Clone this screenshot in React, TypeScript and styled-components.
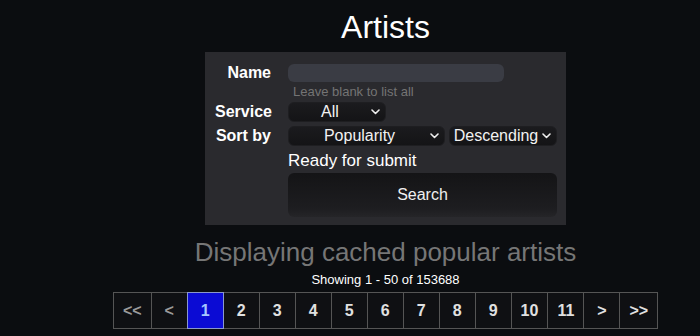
import React from "react";
import styled, { createGlobalStyle } from "styled-components";

const Global = createGlobalStyle`
  html, body { margin: 0; padding: 0; background: #0b0d10; }
  body { font-family: "Liberation Sans", Arial, sans-serif; color: #fff; }
  * { box-sizing: border-box; }
`;

const Page = styled.main`
  width: 700px;
  min-height: 336px;
  padding-left: 71px;
  display: flex;
  flex-direction: column;
  align-items: center;
`;

const Title = styled.h1`
  margin: 9px 0 0;
  font-size: 32px;
  line-height: 37px;
  font-weight: 400;
  color: #fff;
`;

const Panel = styled.form`
  margin-top: 6px;
  width: 361px;
  background: #2a2a2e;
  padding: 12px 9px 8px 10px;
  display: flex;
  flex-direction: column;
`;

const Row = styled.div<{ $mt?: number }>`
  display: grid;
  grid-template-columns: 56px 269px;
  column-gap: 17px;
  align-items: center;
  margin-top: ${(p) => p.$mt ?? 0}px;
`;

const Label = styled.label`
  grid-column: 1;
  text-align: right;
  font-size: 16px;
  font-weight: 700;
  line-height: 18px;
  color: #fff;
  white-space: nowrap;
`;

const Control = styled.div`
  grid-column: 2;
  display: flex;
  gap: 4px;
  align-items: center;
`;

const TextInput = styled.input`
  width: 216px;
  height: 18px;
  border: none;
  border-radius: 6px;
  background: #3a3c44;
  outline: none;
  padding: 0 6px;
  color: #eee;
  font: inherit;
  font-size: 13px;
`;

const Hint = styled.div`
  grid-column: 2;
  padding-left: 5px;
  font-size: 13px;
  line-height: 15px;
  color: #747474;
`;

const SelectBox = styled.button<{ $w: number }>`
  width: ${(p) => p.$w}px;
  height: 20px;
  display: flex;
  align-items: center;
  padding: 0 5px 0 3px;
  border: 1px solid #1e1e21;
  border-radius: 6px;
  background: linear-gradient(#1b1b1e, #141416);
  color: #f2f2f2;
  font-family: "Liberation Sans", Arial, sans-serif;
  font-size: 16px;
  line-height: 18px;
  cursor: pointer;
`;

const SelectText = styled.span`
  flex: 1;
  text-align: center;
  white-space: nowrap;
`;

const Chevron = styled.svg`
  flex: none;
  width: 9px;
  height: 6px;
  margin-left: 3px;
`;

const Status = styled.div`
  grid-column: 2;
  font-size: 17px;
  line-height: 20px;
  color: #fff;
`;

const SearchButton = styled.button`
  grid-column: 2;
  width: 269px;
  height: 44px;
  border: none;
  border-radius: 6px;
  background: linear-gradient(#141416, #1d1d20 80%, #252528);
  color: #f0f0f0;
  font-family: "Liberation Sans", Arial, sans-serif;
  font-size: 16px;
  cursor: pointer;
`;

const Notice = styled.h2`
  margin: 12px 0 0;
  font-size: 26px;
  line-height: 30px;
  font-weight: 400;
  color: #767676;
`;

const Count = styled.div`
  margin-top: 5px;
  font-size: 13px;
  line-height: 15px;
  color: #fff;
`;

const Pager = styled.nav`
  margin-top: 5px;
  display: flex;
  padding-left: 1px;
`;

const PageCell = styled.a<{ $active?: boolean; $disabled?: boolean }>`
  min-width: 37px;
  height: 37px;
  padding: 0 9px;
  margin-left: -1px;
  display: flex;
  align-items: center;
  justify-content: center;
  border: 1px solid ${(p) => (p.$active ? "#8a98cc" : "#555")};
  background: ${(p) => (p.$active ? "#0b0bd4" : "#0f1013")};
  color: ${(p) => (p.$active ? "#a6c6ff" : p.$disabled ? "#9a9a9a" : "#e0e0e0")};
  font-size: 16px;
  font-weight: 700;
  text-decoration: none;
  position: relative;
  z-index: ${(p) => (p.$active ? 1 : 0)};
`;

const Select = ({ w, value }: { w: number; value: string }) => (
  <SelectBox type="button" $w={w}>
    <SelectText>{value}</SelectText>
    <Chevron viewBox="0 0 9 6">
      <path d="M1 1l3.5 3.5L8 1" fill="none" stroke="#eee" strokeWidth="1.6" strokeLinecap="round" strokeLinejoin="round" />
    </Chevron>
  </SelectBox>
);

const pages = ["<<", "<", "1", "2", "3", "4", "5", "6", "7", "8", "9", "10", "11", ">", ">>"];

export default function App() {
  return (
    <>
      <Global />
      <Page>
        <Title>Artists</Title>
        <Panel onSubmit={(e) => e.preventDefault()}>
          <Row>
            <Label>Name</Label>
            <Control>
              <TextInput type="text" />
            </Control>
          </Row>
          <Row $mt={2}>
            <Hint>Leave blank to list all</Hint>
          </Row>
          <Row $mt={3}>
            <Label>Service</Label>
            <Control>
              <Select w={98} value="All" />
            </Control>
          </Row>
          <Row $mt={4}>
            <Label>Sort by</Label>
            <Control>
              <Select w={157} value="Popularity" />
              <Select w={108} value="Descending" />
            </Control>
          </Row>
          <Row $mt={5}>
            <Status>Ready for submit</Status>
          </Row>
          <Row $mt={2}>
            <SearchButton type="submit">Search</SearchButton>
          </Row>
        </Panel>
        <Notice>Displaying cached popular artists</Notice>
        <Count>Showing 1 - 50 of 153688</Count>
        <Pager>
          {pages.map((p, i) => (
            <PageCell key={i} href="#" $active={p === "1"} $disabled={i < 2}>
              {p}
            </PageCell>
          ))}
        </Pager>
      </Page>
    </>
  );
}
